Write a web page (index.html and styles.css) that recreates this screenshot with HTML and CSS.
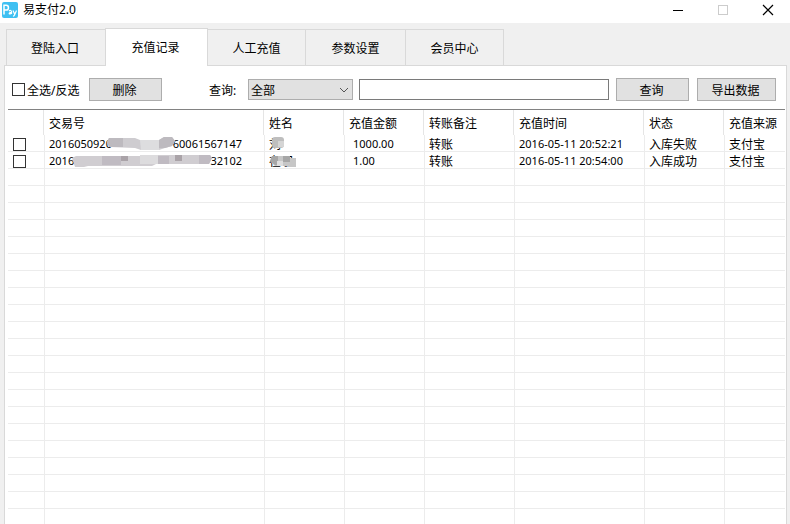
FILE: index.html
```html
<!DOCTYPE html>
<html lang="zh-CN">
<head>
<meta charset="utf-8">
<title>易支付2.0</title>
<link rel="stylesheet" href="styles.css">
</head>
<body>
<div class="window">
  <header class="titlebar">
    <svg class="logo" viewBox="0 0 16 16" aria-hidden="true">
      <rect width="16" height="16" rx="2" fill="#3fc0f2"/>
      <g fill="none" stroke="#fff" stroke-width="1.2">
        <path d="M2 12.500V3.300h2.200c3 0 3 4.700 0 4.700H2" stroke-width="1.500"/>
        <path d="M7 9c1-1 2.500-.6 2.500 .7V12M9.500 10.300C7.500 10.100 6.300 11.900 8 12q1 0 1.500-1"/>
        <path d="M11 8.500l1.600 3.500M14.500 8.500l-2 4.500q-.5 1.200-1.500 1"/>
      </g>
    </svg>
    <h1 class="title">易支付2.0</h1>
    <div class="controls">
      <button class="control" type="button" aria-label="最小化"><svg viewBox="0 0 12 12"><path d="M1 6.500h10" stroke="#000"/></svg></button>
      <button class="control" type="button" aria-label="最大化" disabled><svg viewBox="0 0 12 12"><rect x="1.500" y="1.500" width="9" height="9" stroke="#ccc"/></svg></button>
      <button class="control" type="button" aria-label="关闭"><svg viewBox="0 0 12 12"><path d="M1 1l10 10M11 1L1 11" stroke="#000" stroke-width="1.200"/></svg></button>
    </div>
  </header>
  <nav class="tabs">
    <button class="tab first" type="button">登陆入口</button>
    <button class="tab active" type="button">充值记录</button>
    <button class="tab" type="button">人工充值</button>
    <button class="tab wide" type="button">参数设置</button>
    <button class="tab" type="button">会员中心</button>
  </nav>
  <main class="panel">
    <form class="toolbar">
      <label class="check-all"><input class="check" type="checkbox"><span class="check-text">全选/反选</span></label>
      <button class="button" type="button">删除</button>
      <label class="filter-label" for="filter">查询:</label>
      <span class="select-box">
        <select class="filter" id="filter"><option>全部</option></select>
        <svg class="arrow" viewBox="0 0 10 6" aria-hidden="true"><path d="M1 1l4 4 4-4" fill="none" stroke="#555"/></svg>
      </span>
      <input class="keyword" type="text" aria-label="查询内容">
      <button class="button" type="button">查询</button>
      <button class="button export" type="button">导出数据</button>
    </form>
    <div class="list">
      <table class="records">
        <colgroup><col class="c-check"><col class="c-id"><col class="c-short"><col class="c-short"><col class="c-note"><col class="c-time"><col class="c-short"><col></colgroup>
        <thead>
          <tr><th></th><th>交易号</th><th>姓名</th><th>充值金额</th><th>转账备注</th><th>充值时间</th><th>状态</th><th>充值来源</th></tr>
        </thead>
        <tbody>
          <tr>
            <td class="pick"><input class="check" type="checkbox" aria-label="选择第一条"></td>
            <td><div class="number"><span>2016050920</span><span>60061567147</span>
              <svg class="mask mask-a" viewBox="0 0 68 14"><path d="M2 1H28L33 3H52L57 0H65L68 4L65 9L58 11L52 13H34L28 11L2 10L0 5Z" fill="#ceccd0"/><path d="M2 1H16V10H2L0 5ZM52 3L57 0H65L68 4L65 9L58 11H52Z" fill="#bdbabf"/><path d="M33 3H52V13H34Z" fill="#dddddf"/></svg></div></td>
            <td><div class="number"><span>刘</span><svg class="mask mask-b" viewBox="0 0 12 12"><rect width="12" height="11" rx="3" fill="#bebebe"/><rect x="6" y="4" width="6" height="6" fill="#d5d5d5"/></svg></div></td>
            <td class="amount">1000.00</td><td>转账</td><td>2016-05-11 20:52:21</td><td>入库失败</td><td>支付宝</td>
          </tr>
          <tr>
            <td class="pick"><input class="check" type="checkbox" aria-label="选择第二条"></td>
            <td><div class="number"><span>201605</span><span>32102</span>
              <svg class="mask mask-c" viewBox="0 0 140 12"><path d="M0 3L4 1H68V0H138L140 3L137 9H84L80 11H16L12 12H3Z" fill="#d0cdd1"/><path d="M30 1h19v9H30zM86 1h11v8H86zM127 0h11l2 3-3 6h-10z" fill="#c0bbc2"/><path d="M49 1h7v5h-7zM103 0h7v6h-7z" fill="#aaa3a8"/><path d="M68 0h18v9H68z" fill="#dddcde"/></svg></div></td>
            <td><div class="number"><span>在职</span><svg class="mask mask-d" viewBox="0 0 26 12"><path d="M2 1H20V3H26V12H18V11H5L0 6Z" fill="#c6c6c6"/><path d="M2 1h6v9H5L0 6zM13 1h7v6h-7z" fill="#a6a6a6"/><path d="M7 6h6v5H7z" fill="#dedede"/></svg></div></td>
            <td class="amount">1.00</td><td>转账</td><td>2016-05-11 20:54:00</td><td>入库成功</td><td>支付宝</td>
          </tr>
          <tr><td><td><td><td><td><td><td><td></tr>
          <tr><td><td><td><td><td><td><td><td></tr>
          <tr><td><td><td><td><td><td><td><td></tr>
          <tr><td><td><td><td><td><td><td><td></tr>
          <tr><td><td><td><td><td><td><td><td></tr>
          <tr><td><td><td><td><td><td><td><td></tr>
          <tr><td><td><td><td><td><td><td><td></tr>
          <tr><td><td><td><td><td><td><td><td></tr>
          <tr><td><td><td><td><td><td><td><td></tr>
          <tr><td><td><td><td><td><td><td><td></tr>
          <tr><td><td><td><td><td><td><td><td></tr>
          <tr><td><td><td><td><td><td><td><td></tr>
          <tr><td><td><td><td><td><td><td><td></tr>
          <tr><td><td><td><td><td><td><td><td></tr>
          <tr><td><td><td><td><td><td><td><td></tr>
          <tr><td><td><td><td><td><td><td><td></tr>
          <tr><td><td><td><td><td><td><td><td></tr>
          <tr><td><td><td><td><td><td><td><td></tr>
          <tr><td><td><td><td><td><td><td><td></tr>
          <tr><td><td><td><td><td><td><td><td></tr>
          <tr><td><td><td><td><td><td><td><td></tr>
        </tbody>
      </table>
    </div>
  </main>
</div>
</body>
</html>
```
FILE: styles.css
```css
* { box-sizing: border-box; }

body {
  margin: 0;
  font: 12px/16px "Noto Sans", "Noto Sans CJK SC", sans-serif;
  color: #000;
  background: #f0f0f0;
}

button, input, select { font: inherit; color: inherit; margin: 0; }

.window {
  display: flex;
  flex-direction: column;
  height: 100vh;
  overflow: hidden;
}

.titlebar {
  display: flex;
  flex: none;
  align-items: center;
  height: 23px;
  padding: 0 0 3px 2px;
  background: #fff;
}

.logo { width: 16px; height: 16px; }

.title {
  flex: 1;
  margin: 0 0 0 5px;
  font-size: 12px;
  font-weight: 400;
}

.controls { display: flex; }

.control {
  display: flex;
  align-items: center;
  justify-content: center;
  width: 45px;
  height: 20px;
  padding: 0;
  border: 0;
  background: none;
}

.control svg { width: 12px; height: 12px; fill: none; }

.tabs {
  display: flex;
  flex: none;
  align-items: flex-end;
  height: 43px;
  padding-left: 6px;
  z-index: 1;
}

.tab {
  width: 98px;
  height: 37px;
  padding: 2px 0 0;
  border: 1px solid #d9d9d9;
  border-left: 0;
  background: #f0f0f0;
}

.tab.first { width: 99px; padding-right: 2px; border-left: 1px solid #d9d9d9; border-right: 0; }
.tab.wide { width: 100px; }

.tab.active {
  width: 103px;
  height: 38px;
  padding: 0 2px 0 0;
  border-left: 1px solid #d9d9d9;
  border-bottom: 0;
  background: #fff;
}

.panel {
  display: flex;
  flex: 1;
  flex-direction: column;
  min-height: 0;
  margin: -1px 3px 0 4px;
  border: 1px solid #d9d9d9;
  border-bottom: 0;
  background: #fff;
}

.toolbar {
  display: flex;
  flex: none;
  align-items: center;
  padding: 12px 10px 8px 7px;
}

.check {
  appearance: none;
  flex: none;
  width: 13px;
  height: 13px;
  border: 1px solid #333;
  background: #fff;
}

.check-all {
  display: flex;
  align-items: center;
  gap: 2px;
  width: 77px;
  white-space: nowrap;
}

.check-text, .filter-label { padding-top: 2px; }

.button {
  flex: none;
  width: 73px;
  height: 23px;
  padding: 2px 2px 0 0;
  border: 1px solid #adadad;
  background: #e1e1e1;
}

.export { width: 79px; margin-left: 8px; }

.filter-label { width: 39px; margin-left: 47px; }

.select-box { position: relative; flex: none; }

.filter {
  appearance: none;
  display: block;
  width: 105px;
  height: 21px;
  padding: 2px 20px 0 2px;
  border: 1px solid #adadad;
  border-radius: 0;
  background: #e1e1e1;
}

.arrow {
  position: absolute;
  top: 8px;
  right: 4px;
  width: 10px;
  height: 6px;
  pointer-events: none;
}

.keyword {
  flex: 1;
  min-width: 60px;
  height: 21px;
  margin: 0 7px 0 6px;
  padding: 0 3px;
  border: 1px solid #7a7a7a;
  background: #fff;
}

.list {
  flex: 1;
  min-height: 0;
  margin: 0 1px 0 3px;
  border-top: 1px solid #828282;
  overflow: hidden;
}

.records {
  width: 100%;
  border-collapse: separate;
  border-spacing: 0;
  table-layout: fixed;
}

.c-check { width: 36px; }
.c-id { width: 220px; }
.c-short { width: 80px; }
.c-note { width: 90px; }
.c-time { width: 130px; }

.records th {
  height: 25px;
  padding: 2px 0 0 5px;
  border-right: 1px solid #e5e5e5;
  font-weight: 400;
  text-align: left;
  white-space: nowrap;
}

.records th:last-child { border-right: 0; }

.records td {
  height: 17px;
  padding: 2px 0 0 4px;
  border-left: 1px solid #ececec;
  border-bottom: 1px solid #ececec;
  font-family: "Noto Sans", "Noto Sans CJK SC", sans-serif;
  font-size: 11px;
  line-height: 14px;
  white-space: nowrap;
}

.records td:first-child { padding-left: 5px; border-left: 0; }
.records td:nth-child(3),
.records td:nth-child(5),
.records td:nth-child(7),
.records td:nth-child(8) {
  font-family: "Noto Sans CJK SC", sans-serif;
  font-size: 12px;
}

.records .amount { padding-left: 8px; }

.pick .check { display: block; }

.number {
  display: flex;
  position: relative;
  justify-content: space-between;
  width: 193px;
}

.mask { position: absolute; }
.mask-a { left: 58px; top: 0; width: 68px; height: 14px; }
.mask-b { left: 3px; top: 0; width: 12px; height: 12px; }
.mask-c { left: 23px; top: 1px; width: 140px; height: 12px; }
.mask-d { left: 1px; top: 1px; width: 26px; height: 12px; }
```
